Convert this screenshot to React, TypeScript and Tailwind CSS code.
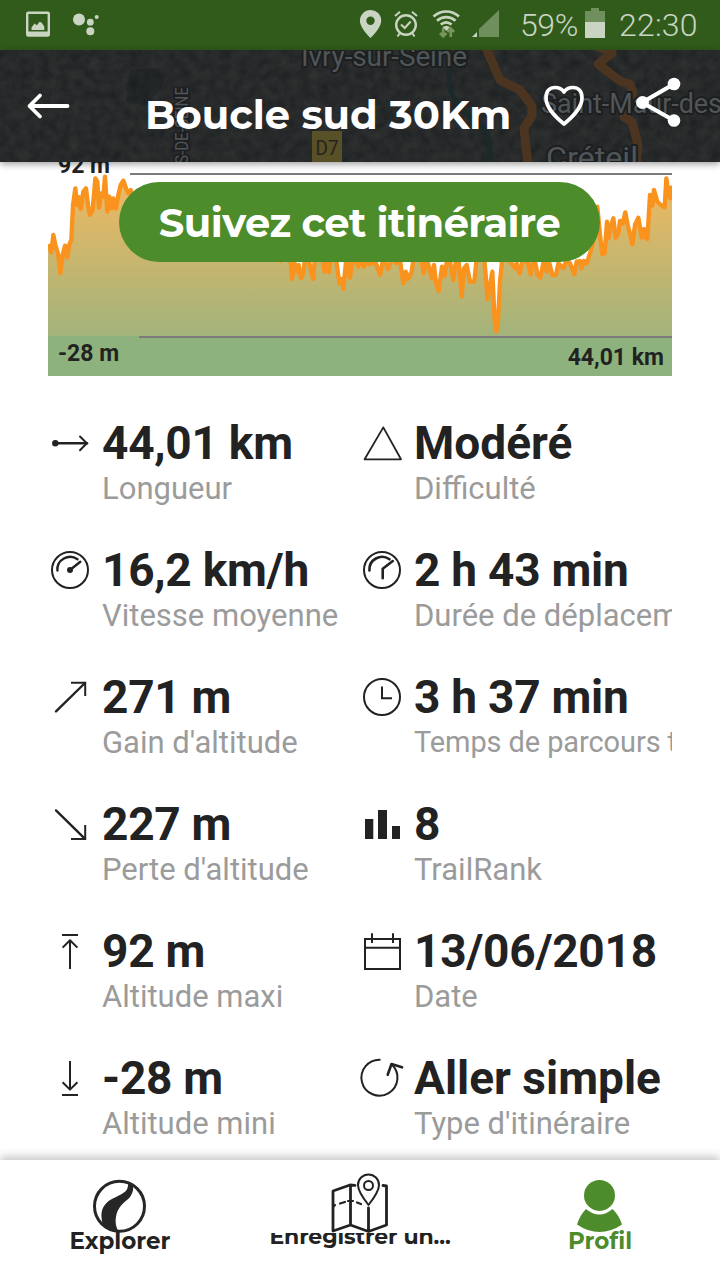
import type { ReactNode } from "react";

type Stat = { value: string; label: string; icon: ReactNode; small?: boolean };

const OUTBOUND: [number, number][] = [
  [0,268],[10,292],[16,240],[22,270],[30,295],[37,355],[44,300],[51,272],[58,308],[64,268],[70,255],[75,150],[82,100],[88,150],[94,127],[98,162],[106,110],[114,100],[120,150],[126,180],[134,165],[142,70],[148,80],[153,158],[160,115],[166,125],[171,65],[178,170],[184,125],[191,160],[196,130],[204,160],[211,120],[218,90],[226,77],[234,100],[241,115],[248,105],[256,130],
  [296,200],[356,170],[426,220],[496,190],[576,240],[636,220],[698,318],[711,290],[726,300],[732,372],[740,325],[748,350],[752,330],[759,370],[766,355],[771,310],[782,315],[795,372],[802,300],[821,300],[830,350],[836,320],[843,352],[849,300],[864,310],[874,385],[881,372],[886,402],[896,300],[906,368],[916,300],[931,335],
];
const INBOUND: [number, number][] = [
  [942,312],[948,335],[956,315],[964,328],[972,325],[984,325],[996,360],[1006,310],[1020,342],[1031,310],[1046,325],[1056,315],[1066,385],[1073,350],[1080,372],[1091,350],[1098,300],[1118,300],[1127,355],[1136,310],[1152,370],[1158,330],[1164,385],[1172,408],[1182,335],[1190,362],[1198,310],[1206,320],[1216,375],[1226,300],[1232,320],[1241,425],[1248,340],[1256,330],[1266,380],[1279,380],[1288,290],[1308,300],[1319,433],[1333,350],[1340,500],[1345,530],[1350,500],[1356,380],[1364,300],[1381,315],[1391,325],[1401,340],[1406,325],[1415,355],[1423,320],[1436,310],[1448,358],[1454,320],[1462,325],[1469,360],[1477,368],[1488,315],[1496,350],[1503,320],[1513,360],[1524,360],[1531,325],[1546,340],[1556,315],[1566,325],[1579,358],[1586,320],[1596,318],[1600,340],[1608,318],[1616,325],[1626,295],[1636,260],[1648,155],[1656,240],[1663,298],[1670,295],[1677,200],[1681,250],[1688,215],[1696,190],[1703,248],[1711,235],[1716,198],[1724,205],[1732,172],[1740,215],[1746,235],[1753,268],[1761,210],[1771,188],[1781,248],[1788,222],[1793,248],[1798,252],[1806,120],[1813,152],[1818,105],[1828,140],[1836,148],[1850,157],[1855,70],[1862,120],[1867,130],[1869,98],[1878,100],
];

const profileLine = [...OUTBOUND, ...INBOUND].map(([x, y]) => `${x},${y - 21}`).join(" ");

function Glyph({ children, w = 2 }: { children: ReactNode; w?: number }) {
  return (
    <svg viewBox="-22 -27 44 54" className="h-[54px] w-11 shrink-0 overflow-visible" fill="none" stroke="#222" strokeWidth={w} strokeLinecap="round" strokeLinejoin="round">
      {children}
    </svg>
  );
}

const stats: Stat[] = [
  { value: "44,01 km", label: "Longueur", icon: <Glyph w={2.6}><circle cx="-14.7" cy="0.3" r="3.2" fill="#222" stroke="none" /><path d="M-14 .3H17" /><path d="M10-6.500 16.800.3 10 7.200" strokeWidth="2" /></Glyph> },
  { value: "Modéré", label: "Difficulté", icon: <Glyph><path d="M1.3-15.6 19 16.3H-17.4Z" strokeWidth="1.8" /></Glyph> },
  { value: "16,2 km/h", label: "Vitesse moyenne", icon: <Glyph><circle r="18" /><path d="M-12.6.5A12.7 12.7 0 0 1 7.5-10.7M0 0 10.3-8.3" strokeWidth="2.4" /><circle r="3" fill="#222" stroke="none" /></Glyph> },
  { value: "2 h 43 min", label: "Durée de déplacement", icon: <Glyph><circle r="18" /><path d="M-12.6.5A12.7 12.7 0 0 1 7.5-10.7M10.8-9 .7-1.3V8.3" strokeWidth="2.6" /></Glyph> },
  { value: "271 m", label: "Gain d'altitude", icon: <Glyph><path d="M-14 14.4 15-14" strokeWidth="2.4" /><path d="M1-14.3H15.2V-1" strokeLinecap="butt" strokeLinejoin="miter" /></Glyph> },
  { value: "3 h 37 min", label: "Temps de parcours total", small: true, icon: <Glyph><circle r="18" /><path d="M0-10.5V1.2H10" strokeLinecap="butt" strokeLinejoin="miter" /></Glyph> },
  { value: "227 m", label: "Perte d'altitude", icon: <Glyph><path d="M-14-13.6 15 14.8" strokeWidth="2.4" /><path d="M1 15H15.2V1" strokeLinecap="butt" strokeLinejoin="miter" /></Glyph> },
  { value: "8", label: "TrailRank", icon: <Glyph><path d="M-17-5h8.3v20H-17zM-4-14h9v29h-9zM10 2h8v13h-8z" fill="#222" stroke="none" /></Glyph> },
  { value: "92 m", label: "Altitude maxi", icon: <Glyph><path d="M-8-16H8M0-11V18M-7.4-3.4 0-10.8 7.4-3.4" strokeLinecap="butt" /></Glyph> },
  { value: "13/06/2018", label: "Date", icon: <Glyph><path d="M-17-12H18V18H-17ZM-17-3.2H18M-10-17.8V-8M11-17.8V-8" strokeLinecap="butt" strokeLinejoin="miter" /></Glyph> },
  { value: "-28 m", label: "Altitude mini", icon: <Glyph><path d="M-8 17H8M0-17V12M-7.4 4.2 0 11.6 7.4 4.2" strokeLinecap="butt" /></Glyph> },
  { value: "Aller simple", label: "Type d'itinéraire", icon: <Glyph><path d="M-1.500-18.300A18 18 0 1 0 9.500-13.700" strokeLinecap="butt" /><path d="M5.700-3.300 9.500-14 20-10.700" strokeWidth="2.600" /></Glyph> },
];

function StatusBar() {
  return (
    <div className="flex h-[50px] shrink-0 items-center bg-[#305b1b] text-[#c9d5c2]">
      <svg viewBox="0 0 110 50" className="h-[50px] w-[110px]" fill="currentColor">
        <rect x="27.2" y="12.7" width="21.6" height="22.8" rx="1" fill="none" stroke="currentColor" strokeWidth="2.4" />
        <path d="M27 31.5h22V36H27zM31.5 30v-2.5l3-4 2.2 1.8 3-3.6 2 1 2.6 3.8V30z" />
        <circle cx="79" cy="19.5" r="6" /><circle cx="90.3" cy="22.2" r="3.4" /><circle cx="90.3" cy="31.3" r="4" /><circle cx="96.7" cy="17" r="2" />
      </svg>
      <svg viewBox="350 0 160 50" className="ml-auto h-[50px] w-[160px]" fill="none" stroke="currentColor" strokeWidth="2">
        <path d="M370.500 10a10.600 10.600 0 0 0-10.600 10.700C359.900 28 370.500 38 370.500 38S381.200 28 381.200 20.700A10.600 10.600 0 0 0 370.500 10Zm0 6.500a4.200 4.200 0 1 1 0 8.400 4.200 4.200 0 0 1 0-8.400Z" fill="currentColor" stroke="none" fillRule="evenodd" />
        <circle cx="406" cy="25" r="9.800" strokeWidth="2.400" />
        <path d="m401 24.500 3.700 3.500 6-6.500M395 16l5-4.200M417 16l-5-4.200M399.500 33.500l-2 3M412.500 33.500l2 3" />
        <path d="M433.500 16.500c7.500-6.700 18-6.700 25.500 0M437 20.700c5.500-4.800 13-4.800 18.500 0M440.800 24.500c3.300-2.700 7.500-2.700 10.800 0" strokeWidth="2.700" />
        <path d="m442.500 27 3.800-1.200 3.700 1.200-3.500 4Z" fill="currentColor" stroke="none" />
        <g stroke="#79965f" strokeWidth="2.600"><path d="M443.200 28v8M440 33l3.200 3.300 3.200-3.300M450.800 37v-8M447.500 31.800l3.300-3.300 3.300 3.300" /></g>
        <path d="M499 10v27h-20V29Z" fill="#6f8f5c" stroke="none" /><path d="M472 37h5v-5Z" fill="currentColor" stroke="none" />
      </svg>
      <span className="ml-[10px] w-[64px] whitespace-nowrap font-[Roboto,sans-serif] text-[32px] font-light leading-[50px] tracking-[-0.4px]">59%</span>
      <svg viewBox="0 0 22 50" className="h-[50px] w-[22px]"><path d="M1 11h6V8h8v3h6v11H1Z" fill="#6f8f5c" /><path d="M1 22h20v16H1Z" fill="#c9d5c2" /></svg>
      <span className="ml-[13px] w-[101px] whitespace-nowrap font-[Roboto,sans-serif] text-[32px] font-light leading-[50px] tracking-[0.2px]">22:30</span>
    </div>
  );
}

function MapBackdrop() {
  return (
    <svg viewBox="0 50 720 112" className="absolute inset-0 h-full w-full font-[Roboto,sans-serif]">
      <defs>
        <filter id="terrain" x="0" y="0" width="100%" height="100%" colorInterpolationFilters="sRGB">
          <feTurbulence type="fractalNoise" baseFrequency="0.1" numOctaves="5" seed="8" />
          <feColorMatrix values="0.09 0 0 0 0.108  0.085 0 0 0 0.12  0.08 0 0 0 0.124  0 0 0 0 1" />
        </filter>
      </defs>
      <rect y="50" width="720" height="112" fill="#25292a" />
      <rect y="50" width="720" height="112" filter="url(#terrain)" />
      <path d="M130 70 157 68 164 82 148 106 126 102Z" fill="#171c1e" opacity=".35" />
      <path d="M449 60V86Q455 106 474 120 489 130 490 146V164" fill="none" stroke="#1b292b" strokeWidth="5" />
      <g fill="none" stroke="#4b3420" strokeWidth="9" strokeLinejoin="round">
        <path d="M485 46 500 80 520 90 532 106V116L524 128 528 166" />
        <path d="M596 46 612 53 598 64 620 81 630 84 633 92 624 117 632 122 638 145 636 166" />
      </g>
      <g fill="#505557" stroke="#1c1f21" strokeWidth="4" strokeLinejoin="round" paintOrder="stroke" fontSize="28">
        <text x="301" y="66" textLength="166">Ivry-sur-Seine</text>
        <text x="541" y="113" fontSize="27" textLength="181" lengthAdjust="spacingAndGlyphs">Saint-Maur-des</text>
        <text x="546" y="168" fontSize="29" textLength="92" lengthAdjust="spacingAndGlyphs">Créteil</text>
        <text transform="translate(188 162) rotate(-90)" x="-2" y="0" fontSize="18" textLength="77" lengthAdjust="spacingAndGlyphs">S-DE-SEINE</text>
      </g>
      <rect x="312" y="131" width="30" height="31" fill="#585026" />
      <text x="315.500" y="155" fontSize="20" fill="#25251f" textLength="23" lengthAdjust="spacingAndGlyphs">D7</text>
    </svg>
  );
}

function Header() {
  return (
    <header className="relative z-20 h-28 shrink-0 shadow-[0_2px_7px_rgba(0,0,0,0.4)]">
      <MapBackdrop />
      <div className="relative flex h-full items-center text-white">
        <svg viewBox="0 50 145 112" className="h-28 w-[145px]" fill="none" stroke="currentColor" strokeWidth="3.800" strokeLinecap="round" strokeLinejoin="round"><path d="M67.500 106H29.500M40 95.500 29.500 106 40 116.500" /></svg>
        <h1 className="w-[370px] whitespace-nowrap pt-[17px] font-[Montserrat,Inter,sans-serif] text-[40px] font-bold leading-[50px]">Boucle sud 30Km</h1>
        <svg viewBox="515 50 205 112" className="h-28 w-[205px]" fill="none" stroke="currentColor" strokeLinecap="round" strokeLinejoin="round">
          <path d="M564 124C558 119 546 109 546 98 546 91 550 87.500 555 87.500 559 87.500 562 89 564 92 566 89 569 87.500 573 87.500 578 87.500 582 91 582 98 582 109 570 119 564 124Z" strokeWidth="3.700" />
          <path d="M674 84 642 102.500 674 120.500" strokeWidth="4.300" />
          <g fill="currentColor" stroke="none"><circle cx="674" cy="84" r="6.300" /><circle cx="642.500" cy="102.500" r="6.500" /><circle cx="674" cy="120.500" r="6.300" /></g>
        </svg>
      </div>
    </header>
  );
}

function ElevationProfile() {
  return (
    <section className="relative mx-12 h-[214px] font-[Roboto,sans-serif] text-[23px] font-bold leading-7 text-[#222]">
      <svg viewBox="0 0 1872 642" className="h-full w-full">
        <defs><linearGradient id="ground" gradientUnits="userSpaceOnUse" x1="0" y1="40" x2="0" y2="522"><stop stopColor="#f2b961" /><stop offset="1" stopColor="#a2b37b" /></linearGradient></defs>
        <polygon points={`0,522 ${profileLine} 1872,522`} fill="url(#ground)" />
        <rect y="522" width="1872" height="120" fill="#8eb27d" />
        <path d="M246 36H1872M273 525H1872" stroke="#7c7a7a" strokeWidth="6" />
        <polyline points={profileLine} fill="none" stroke="#f9931e" strokeWidth="13" strokeLinejoin="round" />
      </svg>
      <span className="absolute left-[10px] top-[-10px]">92 m</span>
      <span className="absolute left-[10px] top-[178px]">-28 m</span>
      <span className="absolute right-[8px] top-[182px]">44,01 km</span>
      <button className="absolute left-[71px] top-5 flex h-20 w-[481px] items-center justify-center whitespace-nowrap rounded-full bg-[#4c8c2b] pt-0.5 font-[Montserrat,Inter,sans-serif] text-[40px] font-bold tracking-[-0.55px] text-white">Suivez cet itinéraire</button>
    </section>
  );
}

function StatCell({ value, label, icon, small }: Stat) {
  const spacing = /\d/.test(value) ? "tracking-[-0.25px]" : "tracking-normal";
  return (
    <div className="flex h-[127px] min-w-0 gap-[10px]">
      {icon}
      <div className="min-w-0 flex-1 overflow-hidden whitespace-nowrap">
        <div className={`text-[46px] font-bold leading-[54px] text-[#222] ${spacing}`}>{value}</div>
        <div className={small ? "text-[29px] leading-9 tracking-[-0.1px] text-[#9b9b9b]" : "text-[31px] leading-[38px] text-[#9b9b9b]"}>{label}</div>
      </div>
    </div>
  );
}

function BottomNav() {
  return (
    <nav className="relative z-10 grid h-[120px] shrink-0 grid-cols-3 bg-white font-[Montserrat,Inter,sans-serif] text-[23px] font-bold text-[#222] shadow-[0_-3px_9px_rgba(0,0,0,0.24)]">
      <div className="flex flex-col items-center">
        <svg viewBox="90 1160 60 73" className="h-[73px] w-[60px]"><circle cx="119.500" cy="1206.300" r="25" fill="none" stroke="#262626" strokeWidth="3" /><path d="M128 1182C129 1191 124 1193 116 1197 104 1202 101 1209 101.500 1217 102 1223 103 1226 105 1228Q112 1232 119 1232C116 1228 115 1222 116 1217 117 1209 122 1204 127 1200 132 1196 134 1190 133 1184Z" fill="#262626" /></svg>
        <span className="leading-4">Explorer</span>
      </div>
      <div className="flex flex-col items-center">
        <svg viewBox="325 1160 70 73" className="h-[73px] w-[70px]" fill="none" stroke="#222" strokeWidth="2.800" strokeLinejoin="round" strokeLinecap="round">
          <path d="M355 1185.300 350 1185 333 1191V1231L350.500 1225 368.500 1231.500 386.500 1225V1186L383 1185.500M350.500 1186V1225M368.500 1208V1231" />
          <path d="M334 1206 335 1205M340 1203.500 345 1202M348 1201H353M357 1202.500 361 1204" strokeWidth="2.200" />
          <path d="M368.500 1205C363 1198 358 1191 358 1185A10.500 10.500 0 0 1 379 1185C379 1191 374 1198 368.500 1205Z" strokeWidth="2" /><circle cx="368.500" cy="1185.500" r="4.500" strokeWidth="2" />
        </svg>
        <div className="h-6 overflow-hidden"><span className="-mt-2 block whitespace-nowrap text-[22px] leading-6 tracking-[-0.1px]">Enregistrer un...</span></div>
      </div>
      <div className="flex flex-col items-center text-[#4c8c2b]">
        <svg viewBox="570 1160 60 73" className="h-[73px] w-[60px]" fill="currentColor"><circle cx="599.500" cy="1195.400" r="15.500" /><path d="M586 1209Q599.500 1220 612.500 1209 619 1215 622 1224.500 611 1232 599.500 1232 588 1232 577 1224.500 580 1215 586 1209Z" /></svg>
        <span className="leading-4">Profil</span>
      </div>
    </nav>
  );
}

export default function App() {
  return (
    <div className="flex h-[1280px] w-[720px] flex-col overflow-hidden bg-white">
      <StatusBar />
      <Header />
      <main className="min-h-0 flex-1 overflow-hidden">
        <ElevationProfile />
        <section className="mx-12 mt-10 grid grid-cols-2 font-[Roboto,sans-serif]">
          {stats.map((stat) => <StatCell key={stat.label} {...stat} />)}
        </section>
      </main>
      <BottomNav />
    </div>
  );
}
